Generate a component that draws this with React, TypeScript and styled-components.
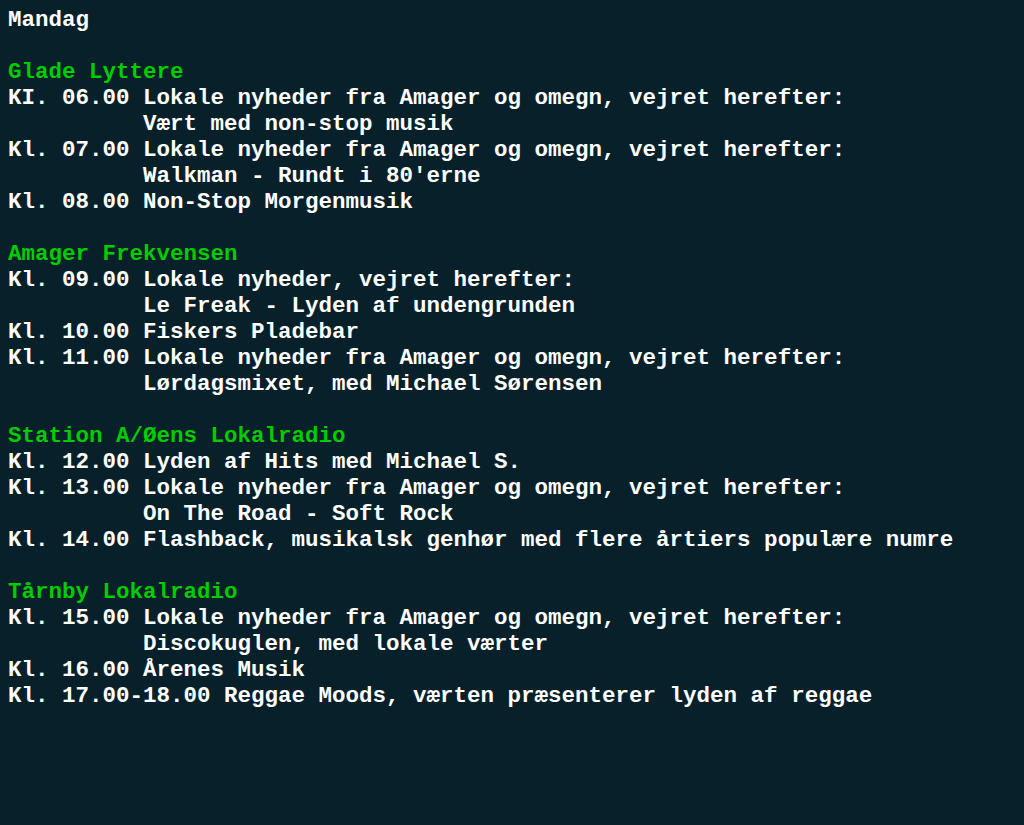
import React from "react";
import styled, { createGlobalStyle } from "styled-components";

const Global = createGlobalStyle`
  html, body { margin: 0; padding: 0; background: #07202a; }
  body { min-height: 825px; }
`;

const Page = styled.main`
  display: flex;
  flex-direction: column;
  padding: 7px 8px;
  font-family: "Courier New", "Nimbus Mono PS", "Nimbus Mono L", "FreeMono", "Liberation Mono", monospace;
  font-weight: bold;
  font-size: 22.5px;
  line-height: 26px;
  color: #ffffff;
  background: #07202a;
  min-height: 825px;
  box-sizing: border-box;
`;

const Day = styled.div`
  color: #ffffff;
  margin-bottom: 26px;
`;

const Block = styled.section`
  display: flex;
  flex-direction: column;
  margin-bottom: 26px;
`;

const Station = styled.div`
  color: #00cc00;
`;

const Line = styled.div<{ $indent?: boolean }>`
  white-space: pre;
  padding-left: ${(p) => (p.$indent ? "10ch" : "0")};
`;

type Entry = { time?: string; text: string };
const data: { station: string; rows: Entry[] }[] = [
  {
    station: "Glade Lyttere",
    rows: [
      { time: "KI. 06.00", text: "Lokale nyheder fra Amager og omegn, vejret herefter:" },
      { text: "Vært med non-stop musik" },
      { time: "Kl. 07.00", text: "Lokale nyheder fra Amager og omegn, vejret herefter:" },
      { text: "Walkman - Rundt i 80'erne" },
      { time: "Kl. 08.00", text: "Non-Stop Morgenmusik" },
    ],
  },
  {
    station: "Amager Frekvensen",
    rows: [
      { time: "Kl. 09.00", text: "Lokale nyheder, vejret herefter:" },
      { text: "Le Freak - Lyden af undengrunden" },
      { time: "Kl. 10.00", text: "Fiskers Pladebar" },
      { time: "Kl. 11.00", text: "Lokale nyheder fra Amager og omegn, vejret herefter:" },
      { text: "Lørdagsmixet, med Michael Sørensen" },
    ],
  },
  {
    station: "Station A/Øens Lokalradio",
    rows: [
      { time: "Kl. 12.00", text: "Lyden af Hits med Michael S." },
      { time: "Kl. 13.00", text: "Lokale nyheder fra Amager og omegn, vejret herefter:" },
      { text: "On The Road - Soft Rock" },
      { time: "Kl. 14.00", text: "Flashback, musikalsk genhør med flere årtiers populære numre" },
    ],
  },
  {
    station: "Tårnby Lokalradio",
    rows: [
      { time: "Kl. 15.00", text: "Lokale nyheder fra Amager og omegn, vejret herefter:" },
      { text: "Discokuglen, med lokale værter" },
      { time: "Kl. 16.00", text: "Årenes Musik" },
      { time: "Kl. 17.00-18.00", text: "Reggae Moods, værten præsenterer lyden af reggae" },
    ],
  },
];

export default function App() {
  return (
    <>
      <Global />
      <Page>
        <Day>Mandag</Day>
        {data.map((b) => (
          <Block key={b.station}>
            <Station>{b.station}</Station>
            {b.rows.map((r, i) =>
              r.time ? (
                <Line key={i}>{`${r.time} ${r.text}`}</Line>
              ) : (
                <Line key={i} $indent>
                  {r.text}
                </Line>
              )
            )}
          </Block>
        ))}
      </Page>
    </>
  );
}
